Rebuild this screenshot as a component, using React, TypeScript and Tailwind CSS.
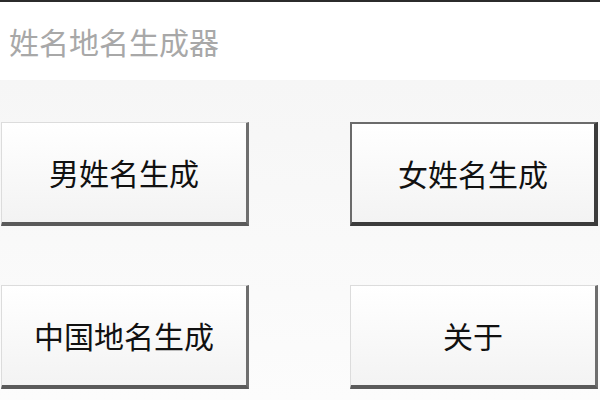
const font = { fontFamily: '"Noto Sans CJK SC", "Noto Sans", sans-serif' };

function Btn({ label, primary }: { label: string; primary?: boolean }) {
  return (
    <button
      className={
        primary
          ? "h-[104px] flex items-center justify-center bg-gradient-to-b from-white to-[#f3f3f3] border-[2px] border-[#6b6b6b] border-r-[4px] border-b-[4px] border-r-[#3c3c3c] border-b-[#3c3c3c] text-[30px] text-[#111]"
          : "h-[104px] flex items-center justify-center bg-gradient-to-b from-white to-[#f3f3f3] border border-[#dcdcdc] border-r-[3px] border-b-[4px] border-r-[#6e6e6e] border-b-[#5a5a5a] text-[30px] text-[#111]"
      }
    >
      {label}
    </button>
  );
}

export default function App() {
  return (
    <div className="w-[600px] h-[400px] flex flex-col bg-white border-t-2 border-[#2b2b2b] overflow-hidden" style={font}>
      {/* title */}
      <div className="h-[78px] flex items-center pl-[9px] text-[30px] text-[#a8a8a8]">
        姓名地名生成器
      </div>

      {/* buttons */}
      <div className="flex-1 bg-gradient-to-b from-[#f6f6f6] to-[#fcfcfc] pt-[42px] pl-[1px] grid grid-cols-[248px_248px] gap-x-[101px] gap-y-[59px] content-start">
        <Btn label="男姓名生成" />
        <Btn label="女姓名生成" primary />
        <Btn label="中国地名生成" />
        <Btn label="关于" />
      </div>
    </div>
  );
}
